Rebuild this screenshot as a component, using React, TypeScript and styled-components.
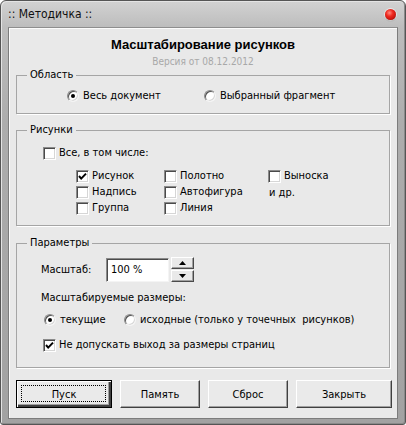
import React from 'react';
import styled, { createGlobalStyle } from 'styled-components';

const Global = createGlobalStyle`
  html, body { margin: 0; padding: 0; background: #ffffff; }
  body {
    font-family: "DejaVu Sans Condensed", "Liberation Sans", Arial, sans-serif;
    font-size: 11px;
    color: #000;
  }
  * { box-sizing: border-box; }
`;

const Frame = styled.div`
  width: 406px;
  height: 425px;
  display: flex;
  flex-direction: column;
  background: linear-gradient(#d2d2d2 0px, #bdbdbd 26px, #adadad 120px, #a2a2a2 100%);
  border: 1px solid #555;
  border-radius: 6px 6px 3px 3px;
  box-shadow: inset 1px 1px 0 #e4e4e4, inset -1px -1px 0 #8a8a8a;
  padding: 0 7px 5px 7px;
`;

const TitleBar = styled.div`
  height: 26px;
  display: flex;
  align-items: center;
  justify-content: space-between;
`;

const TitleText = styled.span`
  font-size: 12px;
  color: #101010;
`;

const CloseDot = styled.span`
  width: 11px;
  height: 11px;
  margin-right: 2px;
  border-radius: 50%;
  background: radial-gradient(circle at 40% 35%, #ff8a80 0%, #f02a20 35%, #b00a05 85%);
  box-shadow: 0 0 0 1px rgba(255, 255, 255, 0.55), 0 1px 1px rgba(0, 0, 0, 0.3);
`;

const Client = styled.div`
  flex: 1;
  display: flex;
  flex-direction: column;
  background: #e9e9e9;
  border: 1px solid #7c7c7c;
  border-top-color: #8e8e8e;
  box-shadow: inset 1px 1px 0 #fbfbfb;
  padding: 9px 7px 0 7px;
`;

const Heading = styled.div`
  text-align: center;
  font-family: "Liberation Sans", Arial, sans-serif;
  font-weight: bold;
  font-size: 13px;
  line-height: 16px;
`;

const Version = styled.div`
  text-align: center;
  color: #a8a8a8;
  font-size: 10px;
  line-height: 12px;
  margin-top: 3px;
`;

const Group = styled.fieldset<{ $mt?: number; $pt: number; $pb: number }>`
  margin: ${(p) => p.$mt ?? 0}px 0 0 0;
  padding: ${(p) => p.$pt}px 0 ${(p) => p.$pb}px 0;
  border: 1px solid #a5a5a5;
  box-shadow: 1px 1px 0 #ffffff;
  min-inline-size: 0;
`;

const Legend = styled.legend`
  margin-left: 10px;
  padding: 0 3px;
  line-height: 14px;
  font-size: 11px;
`;

const Body = styled.div<{ $pl: number }>`
  padding-left: ${(p) => p.$pl}px;
`;

const Row = styled.div<{ $mt?: number; $ml?: number }>`
  display: flex;
  align-items: center;
  height: 14px;
  margin-top: ${(p) => p.$mt ?? 0}px;
  margin-left: ${(p) => p.$ml ?? 0}px;
`;

const Option = styled.label<{ $w?: number }>`
  display: flex;
  align-items: center;
  gap: 4px;
  line-height: 14px;
  white-space: pre;
  ${(p) => (p.$w ? `width: ${p.$w}px;` : '')}
`;

const CheckOption = styled(Option)`
  gap: 3px;
`;

const RadioCircle = styled.span<{ $on?: boolean }>`
  position: relative;
  flex: none;
  width: 12px;
  height: 12px;
  border-radius: 50%;
  background: #ffffff;
  border: 1px solid;
  border-color: #8a8a8a #f4f4f4 #f4f4f4 #8a8a8a;
  box-shadow: inset 1px 1px 0 #505050, inset -1px -1px 0 #d8d8d8;
  &::after {
    content: '';
    display: ${(p) => (p.$on ? 'block' : 'none')};
    position: absolute;
    left: 3px;
    top: 3px;
    width: 4px;
    height: 4px;
    border-radius: 50%;
    background: #000;
  }
`;

const CheckBox = styled.span`
  flex: none;
  width: 13px;
  height: 13px;
  display: flex;
  align-items: center;
  justify-content: center;
  background: #ffffff;
  border: 1px solid;
  border-color: #8a8a8a #ffffff #ffffff #8a8a8a;
  box-shadow: inset 1px 1px 0 #4a4a4a, inset -1px -1px 0 #d6d6d6;
`;

const Grid = styled.div`
  display: grid;
  grid-template-columns: 88px 104px auto;
  row-gap: 2px;
  margin-top: 9px;
  margin-left: 33px;
`;

const Cell = styled.div<{ $pl?: number }>`
  display: flex;
  align-items: center;
  height: 14px;
  padding-left: ${(p) => p.$pl ?? 0}px;
`;

const SpinRow = styled.div`
  display: flex;
  align-items: center;
  height: 25px;
`;

const FieldLabel = styled.span`
  width: 65px;
`;

const Input = styled.div`
  width: 63px;
  height: 24px;
  display: flex;
  align-items: center;
  padding-left: 4px;
  background: #ffffff;
  border: 1px solid;
  border-color: #8a8a8a #f4f4f4 #f4f4f4 #8a8a8a;
  box-shadow: inset 1px 1px 0 #4a4a4a;
`;

const Spin = styled.div`
  display: flex;
  flex-direction: column;
  gap: 1px;
  margin-left: 2px;
`;

const SpinButton = styled.div`
  width: 23px;
  height: 12px;
  display: flex;
  align-items: center;
  justify-content: center;
  background: #e9e9e9;
  border: 1px solid;
  border-color: #ffffff #4a4a4a #4a4a4a #ffffff;
  box-shadow: inset -1px -1px 0 #a0a0a0;
`;

const Buttons = styled.div`
  display: flex;
  gap: 8px;
  margin-top: 12px;
  margin-right: -2px;
`;

const Button = styled.button<{ $w: number; $default?: boolean }>`
  position: relative;
  width: ${(p) => p.$w}px;
  height: 28px;
  padding: 0;
  font-family: "DejaVu Sans Condensed", "Liberation Sans", Arial, sans-serif;
  font-size: 11px;
  color: #000;
  background: #eaeaea;
  border: 1px solid;
  border-color: ${(p) => (p.$default ? '#000' : '#ffffff #404040 #404040 #ffffff')};
  box-shadow: ${(p) =>
    p.$default
      ? 'inset 1px 1px 0 #ffffff, inset -2px -2px 0 #404040, inset -3px -3px 0 #a0a0a0'
      : 'inset -1px -1px 0 #a0a0a0'};
  &::after {
    content: '';
    display: ${(p) => (p.$default ? 'block' : 'none')};
    position: absolute;
    inset: 4px 5px 5px 4px;
    border: 1px dotted #000;
  }
`;

const Tick = () => (
  <svg width="9" height="9" viewBox="0 0 9 9">
    <path d="M1 4 L3.2 6.6 L8 1.6" fill="none" stroke="#000" strokeWidth="2" />
  </svg>
);

const Arrow = ({ up }: { up?: boolean }) => (
  <svg width="7" height="4" viewBox="0 0 7 4">
    <path d={up ? 'M0 4 L3.5 0 L7 4 Z' : 'M0 0 L7 0 L3.5 4 Z'} fill="#000" />
  </svg>
);

const Check = ({ label, on, w }: { label: string; on?: boolean; w?: number }) => (
  <CheckOption $w={w}>
    <CheckBox>{on ? <Tick /> : null}</CheckBox>
    {label}
  </CheckOption>
);

const Radio = ({ label, on, w }: { label: string; on?: boolean; w?: number }) => (
  <Option $w={w}>
    <RadioCircle $on={on} />
    {label}
  </Option>
);

export default function App() {
  return (
    <>
      <Global />
      <Frame>
        <TitleBar>
          <TitleText>:: Методичка ::</TitleText>
          <CloseDot />
        </TitleBar>
        <Client>
          <Heading>Масштабирование рисунков</Heading>
          <Version>Версия от 08.12.2012</Version>

          <Group $pt={7} $pb={10}>
            <Legend>Область</Legend>
            <Body $pl={50}>
              <Row>
                <Radio label="Весь документ" on w={137} />
                <Radio label="Выбранный фрагмент" />
              </Row>
            </Body>
          </Group>

          <Group $mt={9} $pt={9} $pb={10}>
            <Legend>Рисунки</Legend>
            <Body $pl={26}>
              <Row>
                <Check label="Все, в том числе:" />
              </Row>
              <Grid>
                <Cell><Check label="Рисунок" on /></Cell>
                <Cell><Check label="Полотно" /></Cell>
                <Cell><Check label="Выноска" /></Cell>
                <Cell><Check label="Надпись" /></Cell>
                <Cell><Check label="Автофигура" /></Cell>
                <Cell $pl={1}>и др.</Cell>
                <Cell><Check label="Группа" /></Cell>
                <Cell><Check label="Линия" /></Cell>
              </Grid>
            </Body>
          </Group>

          <Group $mt={10} $pt={7} $pb={15}>
            <Legend>Параметры</Legend>
            <Body $pl={24}>
              <SpinRow>
                <FieldLabel>Масштаб:</FieldLabel>
                <Input>100 %</Input>
                <Spin>
                  <SpinButton><Arrow up /></SpinButton>
                  <SpinButton><Arrow /></SpinButton>
                </Spin>
              </SpinRow>
              <Row $mt={8}>Масштабируемые размеры:</Row>
              <Row $mt={9} $ml={3}>
                <Radio label="текущие" on w={80} />
                <Radio label="исходные (только у точечных  рисунков)" />
              </Row>
              <Row $mt={11} $ml={2}>
                <Check label="Не допускать выход за размеры страниц" on />
              </Row>
            </Body>
          </Group>

          <Buttons>
            <Button $w={96} $default>Пуск</Button>
            <Button $w={80}>Память</Button>
            <Button $w={80}>Сброс</Button>
            <Button $w={96}>Закрыть</Button>
          </Buttons>
        </Client>
      </Frame>
    </>
  );
}
